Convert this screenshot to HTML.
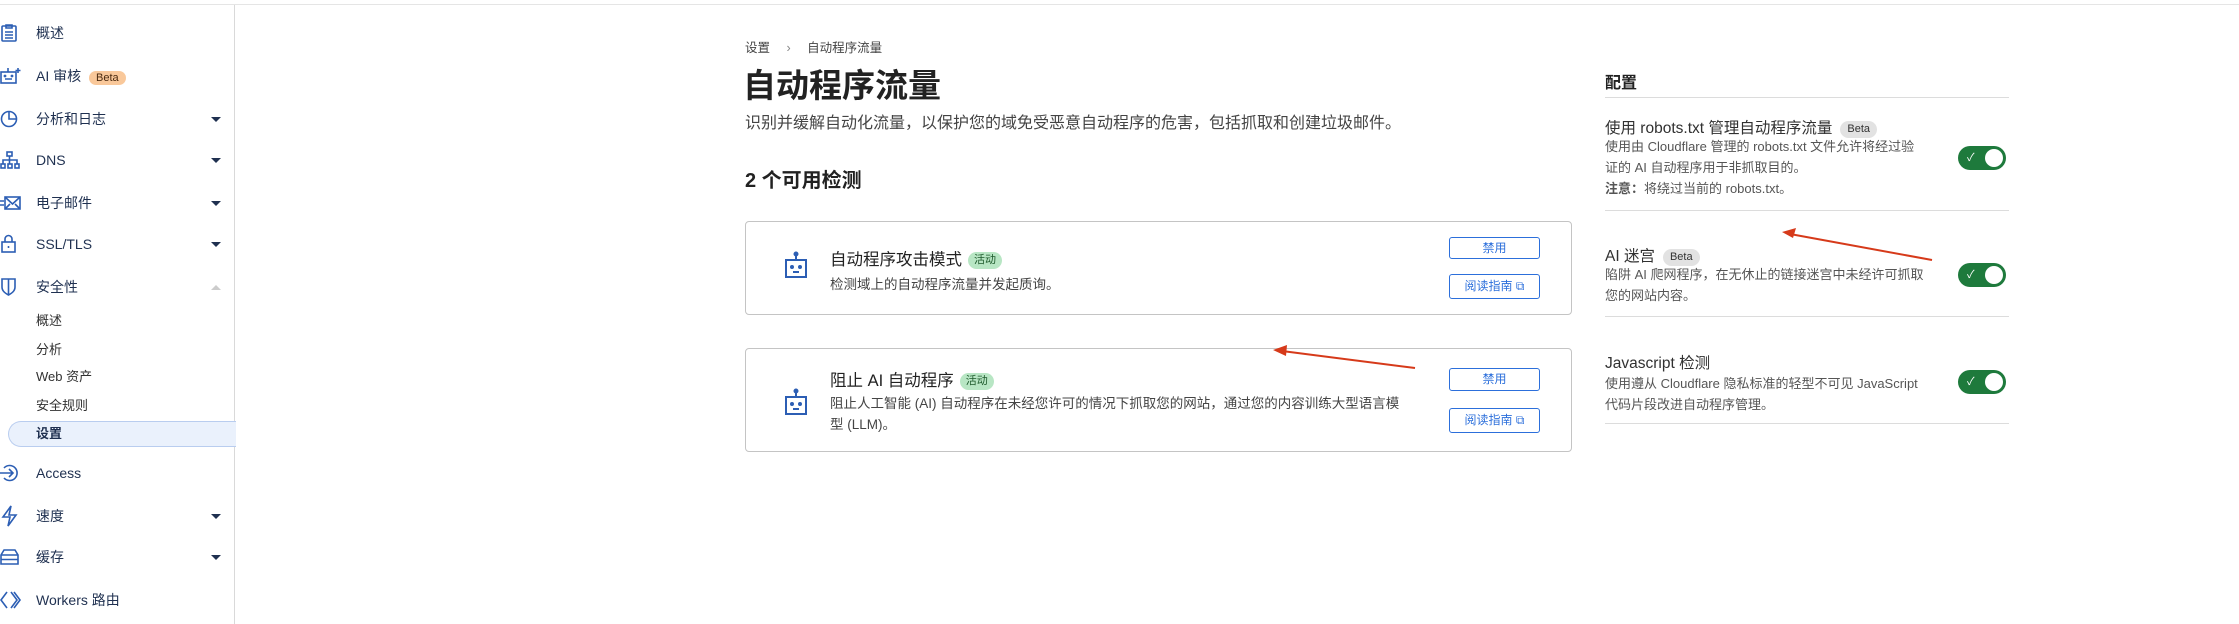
<!DOCTYPE html><html><head><meta charset="utf-8"><style>
*{box-sizing:border-box;margin:0;padding:0}
body{width:2239px;height:624px;background:#fff;font-family:"Liberation Sans","Noto Sans CJK SC",sans-serif;color:#313131;position:relative;overflow:hidden;font-size:14px}
.a{position:absolute;white-space:nowrap}
.side{position:absolute;left:0;top:5px;width:235px;height:619px;border-right:1px solid #d9d9d9}
.top{position:absolute;left:0;top:4px;width:2239px;height:1px;background:#e5e5e5}
.it{position:absolute;left:36px;font-size:14px;color:#1f3050;line-height:20px}
.ic{position:absolute;left:0}
.car{position:absolute;left:211px;width:0;height:0;border-left:5px solid transparent;border-right:5px solid transparent;border-top:5px solid #1f3050}
.sub{position:absolute;left:36px;font-size:13px;color:#313131;line-height:18px}
.card{position:absolute;left:745px;width:827px;border:1px solid #c4c4c4;border-radius:4px}
.btn{position:absolute;left:1449px;width:91px;border:1px solid #2c6fdb;border-radius:3px;color:#2c6fdb;font-size:12px;text-align:center;white-space:nowrap}
.tag{display:inline-block;background:#b8e6c4;color:#1e5a2c;font-size:11px;border-radius:9px;padding:0 6px;line-height:17px;vertical-align:2px;margin-left:6px}
.beta{display:inline-block;background:#e2e2e2;color:#333;font-size:11px;border-radius:9px;padding:0 7px;line-height:17px;margin-left:8px;vertical-align:1px}
.hr{position:absolute;left:1605px;width:404px;height:1px;background:#dcdcdc}
.tog{position:absolute;left:1958px;width:48px;height:24px;border-radius:12px;background:#1e7a3c}
.tog:after{content:"";position:absolute;right:3px;top:3px;width:18px;height:18px;border-radius:50%;background:#fff}
.tog:before{content:"✓";position:absolute;left:9px;top:3px;color:#fff;font-size:11px}
.rt{position:absolute;left:1605px;font-size:15.5px;color:#313131;white-space:nowrap}
.rd{position:absolute;left:1605px;font-size:13px;color:#555;line-height:21px;white-space:nowrap}
</style></head><body>
<div class="top"></div>
<div class="side">
<div class="a" style="left:8px;top:416px;width:228px;height:26px;background:#eaf1fc;border:1px solid #b9cdef;border-right:none;border-radius:13px 0 0 13px"></div>
</div>
<svg class="ic" style="top:23px" width="20" height="20" viewBox="0 0 20 20" fill="none" stroke="#2c5eb4" stroke-width="1.6"><rect x="2" y="3" width="14" height="15" rx="1"/><path d="M6 2h6v3H6zM5 9h8M5 12h8M5 15h8"/></svg>
<div class="it" style="top:23px">概述</div>
<svg class="ic" style="top:66px" width="22" height="20" viewBox="0 0 22 20" fill="none" stroke="#2c5eb4" stroke-width="1.6"><rect x="1" y="6" width="15" height="11"/><path d="M8 6V2M5 13h7"/><circle cx="5" cy="10" r=".6"/><circle cx="12" cy="10" r=".6"/><path d="M18 2v5M15.5 4.5h5"/></svg>
<div class="it" style="top:66px">AI 审核 <span style="background:#f9c89a;color:#4a2a10;font-size:11px;border-radius:9px;padding:1px 7px;margin-left:4px">Beta</span></div>
<svg class="ic" style="top:109px" width="20" height="20" viewBox="0 0 20 20" fill="none" stroke="#2c5eb4" stroke-width="1.6"><circle cx="9" cy="10" r="7.5"/><path d="M9 2.5V10h7.5"/></svg>
<div class="it" style="top:109px">分析和日志</div><div class="car" style="top:117px"></div>
<svg class="ic" style="top:150px" width="20" height="20" viewBox="0 0 20 20" fill="none" stroke="#2c5eb4" stroke-width="1.6"><rect x="7" y="2" width="5" height="4"/><rect x="1" y="14" width="4" height="4"/><rect x="8" y="14" width="4" height="4"/><rect x="15" y="14" width="4" height="4"/><path d="M9.5 6v8M3 14v-4h14v4"/></svg>
<div class="it" style="top:150px">DNS</div><div class="car" style="top:158px"></div>
<svg class="ic" style="top:193px" width="22" height="20" viewBox="0 0 22 20" fill="none" stroke="#2c5eb4" stroke-width="1.6"><rect x="5" y="4" width="15" height="12"/><path d="M5 4l7.5 7L20 4M5 16l5-5M20 16l-5-5M0 8h4M0 12h4"/></svg>
<div class="it" style="top:193px">电子邮件</div><div class="car" style="top:201px"></div>
<svg class="ic" style="top:234px" width="20" height="20" viewBox="0 0 20 20" fill="none" stroke="#2c5eb4" stroke-width="1.6"><rect x="2" y="8" width="13" height="10"/><path d="M5 8V5a3.5 3.5 0 017 0v3M8.5 12v2"/></svg>
<div class="it" style="top:234px">SSL/TLS</div><div class="car" style="top:242px"></div>
<svg class="ic" style="top:277px" width="20" height="20" viewBox="0 0 20 20" fill="none" stroke="#2c5eb4" stroke-width="1.6"><path d="M2 2h13v8c0 4-3 6-6.5 8C5 16 2 14 2 10z"/><path d="M8.5 2v16"/></svg>
<div class="it" style="top:277px">安全性</div>
<div class="car" style="top:285px;border-top:none;border-bottom:5px solid #ccc"></div>
<div class="sub" style="top:312px">概述</div>
<div class="sub" style="top:341px">分析</div>
<div class="sub" style="top:368px">Web 资产</div>
<div class="sub" style="top:397px">安全规则</div>
<div class="sub" style="top:425px;font-weight:bold;color:#1f3050">设置</div>
<svg class="ic" style="top:463px" width="20" height="20" viewBox="0 0 20 20" fill="none" stroke="#2c5eb4" stroke-width="1.6"><path d="M4 5a7.5 7.5 0 110 10"/><path d="M0 10h13M9 6l4 4-4 4"/></svg>
<div class="it" style="top:463px">Access</div>
<svg class="ic" style="top:505px" width="20" height="22" viewBox="0 0 20 22" fill="none" stroke="#2c5eb4" stroke-width="1.6"><path d="M11 1L3 12h7l-2 9 8-11H9z"/></svg>
<div class="it" style="top:506px">速度</div><div class="car" style="top:514px"></div>
<svg class="ic" style="top:547px" width="20" height="20" viewBox="0 0 20 20" fill="none" stroke="#2c5eb4" stroke-width="1.6"><path d="M1 8l3-5h11l3 5v9H1zM1 8h17M1 12.5h17"/></svg>
<div class="it" style="top:547px">缓存</div><div class="car" style="top:555px"></div>
<svg class="ic" style="top:590px" width="22" height="20" viewBox="0 0 22 20" fill="none" stroke="#2c5eb4" stroke-width="1.6"><path d="M7 2L1 10l6 8M11 2l6 8-6 8M14 2l6 8-6 8"/></svg>
<div class="it" style="top:590px">Workers 路由</div>

<div class="a" style="left:745px;top:37px;font-size:12.5px;color:#444">设置 <span style="margin:0 13px;color:#888">›</span> 自动程序流量</div>
<div class="a" style="left:743px;top:59px;font-size:33px;font-weight:bold;color:#222">自动程序流量</div>
<div class="a" style="left:745px;top:109px;font-size:16px;color:#444">识别并缓解自动化流量，以保护您的域免受恶意自动程序的危害，包括抓取和创建垃圾邮件。</div>
<div class="a" style="left:745px;top:164px;font-size:20px;font-weight:bold;color:#222">2 个可用检测</div>

<div class="card" style="top:221px;height:94px"></div>
<svg class="a" style="left:784px;top:251px" width="24" height="28" viewBox="0 0 24 28" fill="none" stroke="#2c5eb4" stroke-width="2"><rect x="2" y="9" width="20" height="17"/><path d="M12 9V3"/><circle cx="12" cy="3" r="1.5" fill="#2c5eb4"/><circle cx="8" cy="16" r="1" fill="#2c5eb4"/><circle cx="16" cy="16" r="1" fill="#2c5eb4"/><path d="M9 21h6"/></svg>
<div class="a" style="left:830px;top:246px;font-size:16.5px;color:#222">自动程序攻击模式<span class="tag">活动</span></div>
<div class="a" style="left:830px;top:273px;font-size:13.5px;color:#444">检测域上的自动程序流量并发起质询。</div>
<div class="btn" style="top:237px;height:22px;line-height:20px">禁用</div>
<div class="btn" style="top:274px;height:25px;line-height:23px">阅读指南 ⧉</div>

<div class="card" style="top:348px;height:104px"></div>
<svg class="a" style="left:784px;top:388px" width="24" height="28" viewBox="0 0 24 28" fill="none" stroke="#2c5eb4" stroke-width="2"><rect x="2" y="9" width="20" height="17"/><path d="M12 9V3"/><circle cx="12" cy="3" r="1.5" fill="#2c5eb4"/><circle cx="8" cy="16" r="1" fill="#2c5eb4"/><circle cx="16" cy="16" r="1" fill="#2c5eb4"/><path d="M9 21h6"/></svg>
<div class="a" style="left:830px;top:367px;font-size:16.5px;color:#222">阻止 AI 自动程序<span class="tag">活动</span></div>
<div class="a" style="left:830px;top:393px;font-size:13.5px;color:#444;line-height:21px">阻止人工智能 (AI) 自动程序在未经您许可的情况下抓取您的网站，通过您的内容训练大型语言模<br>型 (LLM)。</div>
<div class="btn" style="top:368px;height:23px;line-height:21px">禁用</div>
<div class="btn" style="top:408px;height:25px;line-height:23px">阅读指南 ⧉</div>

<div class="a" style="left:1605px;top:69px;font-size:16px;font-weight:bold;color:#222">配置</div>
<div class="hr" style="top:97px"></div>
<div class="rt" style="top:116px">使用 robots.txt 管理自动程序流量<span class="beta">Beta</span></div>
<div class="rd" style="top:136px">使用由 Cloudflare 管理的 robots.txt 文件允许将经过验<br>证的 AI 自动程序用于非抓取目的。<br><b>注意：</b>将绕过当前的 robots.txt。</div>
<div class="tog" style="top:146px"></div>
<div class="hr" style="top:210px"></div>
<div class="rt" style="top:244px">AI 迷宫<span class="beta">Beta</span></div>
<div class="rd" style="top:264px">陷阱 AI 爬网程序，在无休止的链接迷宫中未经许可抓取<br>您的网站内容。</div>
<div class="tog" style="top:263px"></div>
<div class="hr" style="top:316px"></div>
<div class="rt" style="top:351px">Javascript 检测</div>
<div class="rd" style="top:373px">使用遵从 Cloudflare 隐私标准的轻型不可见 JavaScript<br>代码片段改进自动程序管理。</div>
<div class="tog" style="top:370px"></div>
<div class="hr" style="top:423px"></div>

<svg class="a" style="left:0;top:0" width="2239" height="624">
<line x1="1932" y1="260" x2="1790" y2="234" stroke="#d63a1a" stroke-width="2"/>
<polygon points="1782,232 1796,228 1793,238" fill="#d63a1a"/>
<line x1="1415" y1="368" x2="1282" y2="351" stroke="#d63a1a" stroke-width="2"/>
<polygon points="1273,350 1287,345 1286,356" fill="#d63a1a"/>
</svg>
</body></html>
